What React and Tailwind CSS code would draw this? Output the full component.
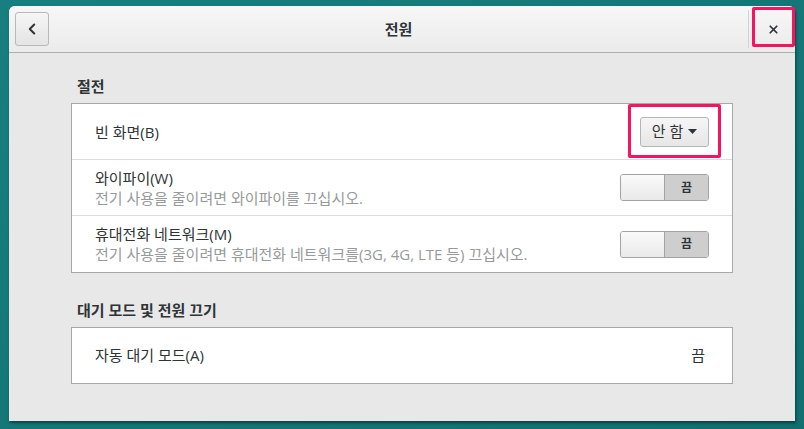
import { ChevronLeft, X } from "lucide-react";

const font = { fontFamily: '"Open Sans", "Noto Sans CJK KR", sans-serif' };

function Switch() {
  return (
    <div className="flex w-[89px] h-[27px] rounded-[3px] border border-[#a3a3a3] overflow-hidden">
      <div className="w-[44px] h-full bg-gradient-to-b from-[#fafafa] to-[#e9e9e9] border-r border-[#a3a3a3]" />
      <div className="flex-1 flex items-center justify-center bg-[#cecece] text-[12px] font-bold text-[#2e3436]">
        끔
      </div>
    </div>
  );
}

function Row({ title, subtitle, children, last }) {
  return (
    <div
      className={`flex items-center justify-between px-[23px] ${
        last ? "" : "border-b border-[#dcdcdc]"
      } h-[56px]`}
    >
      <div className="flex flex-col">
        <span className="text-[15px] leading-[20px] text-[#2e3436]">{title}</span>
        {subtitle && (
          <span className="text-[15px] leading-[20px] text-[#969a9a]">{subtitle}</span>
        )}
      </div>
      {children}
    </div>
  );
}

export default function App() {
  return (
    <div
      className="w-[804px] h-[429px] bg-gradient-to-br from-[#177f80] to-[#11706f] overflow-hidden pt-[6px] pl-[9px]"
      style={font}
    >
      <div className="w-[786px] h-[415px] flex flex-col bg-[#e8e8e8] rounded-t-[6px] shadow-[1px_2px_3px_rgba(0,0,0,0.45)]">
        {/* Header bar */}
        <div className="relative h-[47px] flex items-center rounded-t-[6px] bg-gradient-to-b from-[#f7f7f7] to-[#ebebeb] border-b border-[#aeaeae]">
          <button className="ml-[6px] w-[34px] h-[34px] flex items-center justify-center rounded-[3px] border border-[#b8b8b8] bg-gradient-to-b from-[#f6f6f6] to-[#e4e4e4]">
            <ChevronLeft className="w-[18px] h-[18px] text-[#2e3436]" strokeWidth={2.6} />
          </button>
          <div className="flex-1 text-center text-[15px] font-bold text-[#2e3436]">전원</div>
          <div className="w-px h-[38px] bg-[#d2d2d2] mr-[3px]" />
          <div className="w-[43px] h-full flex items-center justify-center">
            <X className="w-[13px] h-[13px] text-[#2e3436]" strokeWidth={3.2} />
          </div>
          <div className="absolute right-[0px] top-[1px] w-[43px] h-[40px] border-[3px] border-[#f7135f] rounded-[2px]" />
        </div>

        {/* Content */}
        <div className="flex flex-col px-[62px] pt-[23px]">
          <div className="text-[15px] leading-[20px] font-bold text-[#2e3436] pl-[6px] mb-[7px]">절전</div>
          <div className="bg-white border border-[#a8a8a8] flex flex-col">
            <Row title="빈 화면(B)">
              <div className="relative">
                <button className="w-[69px] h-[30px] flex items-center justify-center gap-[5px] rounded-[3px] border border-[#b5b5b5] bg-gradient-to-b from-[#f6f6f6] to-[#e6e6e6] text-[15px] text-[#2e3436]">
                  안 함
                  <svg width="9" height="5" viewBox="0 0 9 5">
                    <path d="M0 0 L9 0 L4.5 5 Z" fill="#2e3436" />
                  </svg>
                </button>
                <div className="absolute -left-[12px] -top-[13px] w-[93px] h-[54px] border-[3px] border-[#f7135f] rounded-[2px]" />
              </div>
            </Row>
            <Row title="와이파이(W)" subtitle="전기 사용을 줄이려면 와이파이를 끄십시오.">
              <Switch />
            </Row>
            <Row
              title="휴대전화 네트워크(M)"
              subtitle="전기 사용을 줄이려면 휴대전화 네트워크를(3G, 4G, LTE 등) 끄십시오."
              last
            >
              <Switch />
            </Row>
          </div>

          <div className="mt-[27px] text-[15px] leading-[20px] font-bold text-[#2e3436] pl-[6px] mb-[7px]">
            대기 모드 및 전원 끄기
          </div>
          <div className="bg-white border border-[#a8a8a8] flex items-center justify-between h-[57px] px-[23px] pr-[27px]">
            <span className="text-[15px] text-[#2e3436]">자동 대기 모드(A)</span>
            <span className="text-[15px] text-[#2e3436]">끔</span>
          </div>
        </div>
      </div>
    </div>
  );
}
